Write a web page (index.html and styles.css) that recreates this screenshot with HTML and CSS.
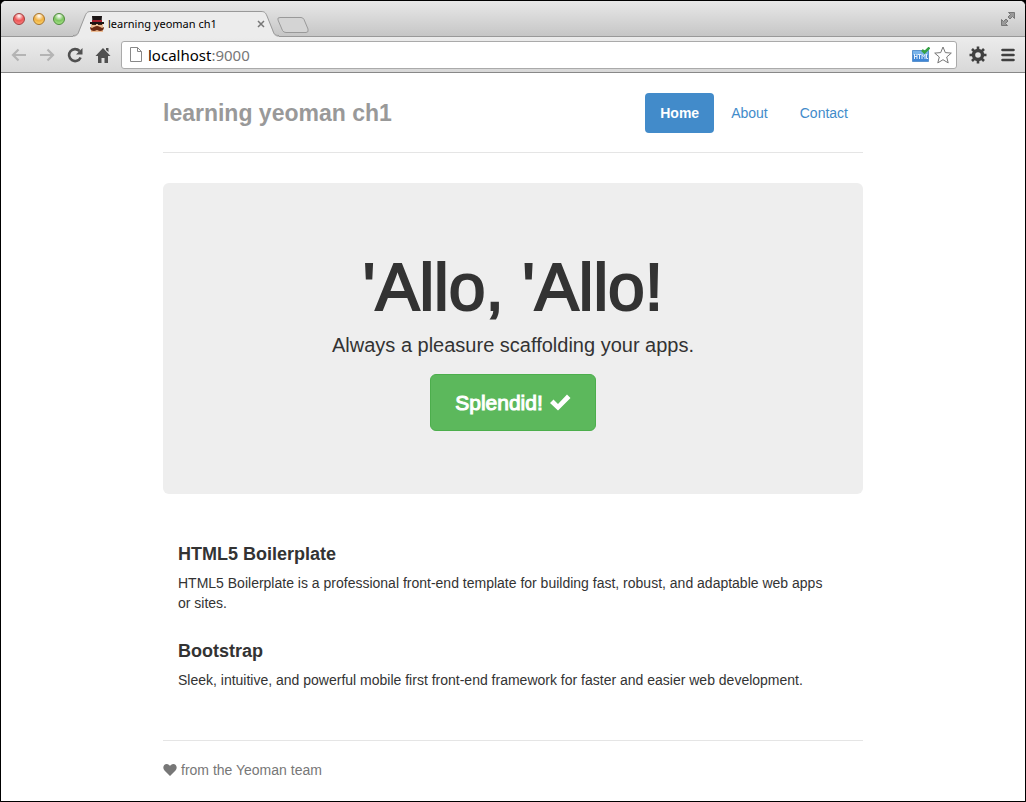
FILE: index.html
```html
<!DOCTYPE html>
<html lang="en">

<head>
    <meta charset="utf-8">
    <meta name="viewport" content="width=device-width, initial-scale=1">
    <title>learning yeoman ch1</title>
    <link rel="stylesheet" href="styles.css">
</head>

<body>
    <div class="window">
        <div class="tabstrip">
            <div class="lights">
                <button class="light red" aria-label="Close"></button>
                <button class="light yellow" aria-label="Minimize"></button>
                <button class="light green" aria-label="Zoom"></button>
            </div>
            <div class="browser-tab">
                <svg class="tab-shape" viewBox="0 0 206 26" aria-hidden="true">
                    <path d="M0 25.500C4 25.500 5 24 6 21L12 5C13.500 1.500 14.500.5 18 .5H188C191.500.5 192.500 1.500 194 5L200 21C201 24 202 25.500 206 25.500V26H0Z" fill="#ececec"/>
                    <path d="M0 24.500C4 24.500 5 23 6 20L12 5C13.500 1.500 14.500.5 18 .5H188C191.500.5 192.500 1.500 194 5L200 20C201 23 202 24.500 206 24.500" fill="none" stroke="#999"/>
                </svg>
                <svg class="favicon" viewBox="0 0 16 16" aria-hidden="true">
                    <path d="M3 0h10l-.5 6h-9z" fill="#1b1414"/>
                    <path d="M3 4h10v2H3z" fill="#a51d2c"/>
                    <path d="M1 6h14v2H1z" fill="#1b1414"/>
                    <path d="M2 8h12v8H2z" fill="#edbd94"/>
                    <path d="M3 8h4v1H3zM9 8h4v1H9z" fill="#3a2218"/>
                    <path d="M8 10c2 0 3 1 5 2l2-1c0 3-2 4-4 4-2 0-2-1-3-1s-1 1-3 1c-2 0-4-1-4-4l2 1c2-1 3-2 5-2z" fill="#6b2a14"/>
                </svg>
                <span class="tab-title">learning yeoman ch1</span>
                <button class="tab-close" aria-label="Close tab">
                    <svg width="8" height="8" viewBox="0 0 8 8"><path d="M1 1l6 6M7 1L1 7" stroke="#777" stroke-width="1.500"/></svg>
                </button>
            </div>
            <button class="new-tab" aria-label="New tab">
                <svg width="34" height="18" viewBox="0 0 34 18"><path d="M4 1.500H25Q27 1.500 28 3.500L32 13Q33 16.500 30 16.500H10Q7.500 16.500 6.500 14.500L2 4Q1 1.500 4 1.500Z" fill="#d4d4d4" stroke="#999"/></svg>
            </button>
            <button class="fullscreen" aria-label="Full screen">
                <svg width="16" height="16" viewBox="0 0 16 16" fill="#999" stroke="#777"><path d="M8.500 1.500h6v6L12.500 5.500 10 8 8 6l2.500-2.500zM7.500 14.500h-6v-6l2 2L6 8l2 2-2.500 2.500z"/></svg>
            </button>
        </div>

        <div class="toolbar">
            <button class="tool" aria-label="Back">
                <svg width="16" height="14" viewBox="0 0 16 14"><path d="M15 7H2M7.500 1.500L2 7l5.500 5.500" fill="none" stroke="#b4b4b4" stroke-width="2.200"/></svg>
            </button>
            <button class="tool" aria-label="Forward">
                <svg width="16" height="14" viewBox="0 0 16 14"><path d="M1 7h13M8.500 1.500L14 7l-5.500 5.500" fill="none" stroke="#b4b4b4" stroke-width="2.200"/></svg>
            </button>
            <button class="tool" aria-label="Reload">
                <svg width="16" height="16" viewBox="0 0 16 16"><path d="M12.500 4A6 6 0 1 0 13.600 10.500" fill="none" stroke="#505050" stroke-width="2.600"/><path d="M15.500 1v6.500H9z" fill="#505050"/></svg>
            </button>
            <button class="tool" aria-label="Home page">
                <svg width="16" height="16" viewBox="0 0 16 16" fill="#505050"><path d="M8 1l7.500 8H13v7H9.500v-5h-3v5H3V9H.5zM11 1h2.500v4L11 3z"/></svg>
            </button>
            <div class="omnibox">
                <svg width="12" height="15" viewBox="0 0 12 15"><path d="M.5.5h7l4 4v10H.5zM7.500.5v4h4" fill="#fff" stroke="#888"/></svg>
                <label class="address"><input type="text" value="localhost:9000" aria-label="Address"><span class="address-text" aria-hidden="true">localhost<span class="port">:9000</span></span></label>
                <svg width="18" height="16" viewBox="0 0 18 16" aria-hidden="true">
                    <path d="M.5 3.500h16v11H.5z" fill="#3f86d6" stroke="#5b93cf"/>
                    <path d="M1 4h15v4H1z" fill="#79b4ea"/>
                    <path d="M2.500 7v5M5 7v5M2.500 9.500H5M6 7.500h3M7.500 7.500V12M10 12V7.500l1.500 2 1.500-2V12M14.500 7v4.500H16" fill="none" stroke="#e4f0fb"/>
                    <path d="M10 3l2.500 2.500L17.500.5" fill="none" stroke="#36a246" stroke-width="2.500"/>
                </svg>
                <svg width="18" height="18" viewBox="0 0 18 18" aria-hidden="true"><path d="M9 1l2.300 5.600 6 .5-4.600 3.900 1.500 5.900L9 13.700l-5.200 3.200L5.300 11 .7 7.100l6-.5z" fill="#fff" stroke="#777"/></svg>
            </div>
            <button class="tool" aria-label="Settings">
                <svg width="18" height="18" viewBox="0 0 18 18"><circle cx="9" cy="9" r="4.500" fill="none" stroke="#404040" stroke-width="3.400"/><path d="M9 .5v4M9 13.500v4M.5 9h4M13.500 9h4M3 3l2.500 2.500M12.500 12.500L15 15M3 15l2.500-2.500M12.500 5.500L15 3" stroke="#404040" stroke-width="2.600"/></svg>
            </button>
            <button class="tool menu" aria-label="Menu">
                <svg width="14" height="14" viewBox="0 0 14 14"><path d="M1.500 2h11M1.500 7h11M1.500 12h11" stroke="#404040" stroke-width="2.600" stroke-linecap="round"/></svg>
            </button>
        </div>

        <div class="container">
            <header class="header">
                <h3 class="brand">learning yeoman ch1</h3>
                <nav class="nav">
                    <a class="nav-link active" href="#">Home</a>
                    <a class="nav-link" href="#">About</a>
                    <a class="nav-link" href="#">Contact</a>
                </nav>
            </header>

            <main>
                <div class="jumbotron">
                    <h1>'Allo, 'Allo!</h1>
                    <p class="lead">Always a pleasure scaffolding your apps.</p>
                    <a class="btn" href="#">Splendid!
                        <svg width="22" height="20" viewBox="0 0 22 20" aria-hidden="true"><path d="M1 10l3.500-3.500L9 11l9-9.500L21.500 5 9 17.500z" fill="#fff"/></svg>
                    </a>
                </div>

                <div class="marketing">
                    <h4>HTML5 Boilerplate</h4>
                    <p>HTML5 Boilerplate is a professional front-end template for building fast, robust, and adaptable web apps or sites.</p>
                    <h4>Bootstrap</h4>
                    <p>Sleek, intuitive, and powerful mobile first front-end framework for faster and easier web development.</p>
                </div>
            </main>

            <footer class="footer">
                <svg width="14" height="12" viewBox="0 0 14 12" aria-hidden="true"><path d="M7 12L1.500 6.500C-1 3.500.8 0 3.700 0 5.300 0 6.500 1 7 2.200 7.500 1 8.700 0 10.300 0 13.200 0 15 3.500 12.500 6.500z" fill="#777"/></svg>
                <p>from the Yeoman team</p>
            </footer>
        </div>
    </div>
</body>

</html>
```
FILE: styles.css
```css
* {
    box-sizing: border-box;
}

body {
    margin: 0;
    background-color: #000;
    color: #333;
    font-family: "Liberation Sans", Arial, sans-serif;
    font-size: 14px;
    line-height: 20px;
}

button {
    display: flex;
    padding: 0;
    border: 0;
    background: none;
    cursor: pointer;
}

h1,
h3,
h4,
p {
    margin: 0;
}

/* Browser window */
.window {
    min-height: 100vh;
    border: 1px solid #000;
    border-radius: 6px 6px 0 0;
    background-color: #fff;
    overflow: hidden;
}

.tabstrip {
    display: flex;
    align-items: center;
    height: 36px;
    padding: 0 9px 0 12px;
    border-bottom: 1px solid #999;
    background: linear-gradient(#e8e8e8, #c6c6c6);
}

.lights {
    display: flex;
    gap: 8px;
}

.light {
    width: 12px;
    height: 12px;
    border: 1px solid #777;
    border-radius: 50%;
}

.red {
    border-color: #a33d3d;
    background: radial-gradient(circle at 50% 20%, #fff, #ee5555 50%, #f98f8f);
}

.yellow {
    border-color: #a8742c;
    background: radial-gradient(circle at 50% 20%, #fff, #f0b040 50%, #ffe07a);
}

.green {
    border-color: #4e8a3c;
    background: radial-gradient(circle at 50% 20%, #fff, #7cc560 50%, #b6ee94);
}

.browser-tab {
    position: relative;
    display: flex;
    align-items: center;
    align-self: flex-end;
    width: 206px;
    height: 25px;
    margin-left: 8px;
    padding: 0 14px 0 16px;
    color: #000;
    font-family: "Noto Sans", sans-serif;
    font-size: 11px;
}

.tab-shape {
    position: absolute;
    top: 0;
    left: 0;
    width: 206px;
    height: 26px;
}

.favicon {
    position: relative;
    width: 16px;
    height: 16px;
}

.tab-title {
    position: relative;
    flex: 1;
    margin-left: 3px;
    white-space: nowrap;
}

.tab-close {
    position: relative;
}

.new-tab {
    margin: 12px 0 0 -3px;
}

.fullscreen {
    margin-left: auto;
}

.toolbar {
    display: flex;
    align-items: center;
    gap: 12px;
    height: 36px;
    padding: 0 10px;
    border-bottom: 1px solid #888;
    background: linear-gradient(#ececec, #d8d8d8);
}

.omnibox {
    display: flex;
    flex: 1;
    align-items: center;
    gap: 4px;
    height: 28px;
    margin-left: -2px;
    padding: 0 4px 0 8px;
    border: 1px solid #aaa;
    border-radius: 3px;
    background-color: #fff;
}

.menu {
    margin-left: 2px;
}

.address {
    display: grid;
    flex: 1;
    margin-left: 2px;
    color: #000;
    font-family: "Noto Sans", sans-serif;
    font-size: 15px;
}

.address input,
.address-text {
    grid-area: 1 / 1;
}

.address input {
    width: 100%;
    padding: 0;
    border: 0;
    outline: 0;
    background: none;
    color: transparent;
    caret-color: #000;
    font: inherit;
}

.address-text {
    pointer-events: none;
}

.port {
    color: #777;
}

/* Page */
.container {
    max-width: 700px;
    margin: 0 auto;
    padding-top: 20px;
}

.header {
    display: flex;
    align-items: center;
    justify-content: space-between;
    padding-bottom: 19px;
    border-bottom: 1px solid #e5e5e5;
}

.brand {
    color: #999;
    font-size: 23px;
    font-weight: 700;
    line-height: 40px;
}

.nav {
    display: flex;
    gap: 2px;
}

.nav-link {
    padding: 10px 15px;
    border-radius: 4px;
    color: #428bca;
    text-decoration: none;
}

.nav-link.active {
    background-color: #428bca;
    color: #fff;
    font-weight: 700;
}

.jumbotron {
    margin-top: 30px;
    padding: 72px 60px 63px;
    border-radius: 6px;
    background-color: #eee;
    text-align: center;
}

.jumbotron h1 {
    font-size: 66px;
    font-weight: 400;
    line-height: 64px;
    -webkit-text-stroke: 2px #333;
}

.lead {
    margin: 11px 0 14px;
    font-size: 20px;
    line-height: 30px;
}

.btn {
    display: inline-flex;
    align-items: center;
    gap: 6px;
    padding: 14px 24px;
    border: 1px solid #4cae4c;
    border-radius: 6px;
    background-color: #5cb85c;
    color: #fff;
    font-size: 21px;
    line-height: 27px;
    text-decoration: none;
    -webkit-text-stroke: 1px #fff;
}

.marketing {
    margin: 40px 0 50px;
    padding: 0 30px 0 15px;
}

.marketing h4 {
    padding-top: 10px;
    font-size: 18px;
    font-weight: 700;
    line-height: 20px;
}

.marketing p {
    margin: 9px 0 18px;
}

.footer {
    display: flex;
    align-items: center;
    gap: 4px;
    padding-top: 19px;
    border-top: 1px solid #e5e5e5;
    color: #777;
}
```
